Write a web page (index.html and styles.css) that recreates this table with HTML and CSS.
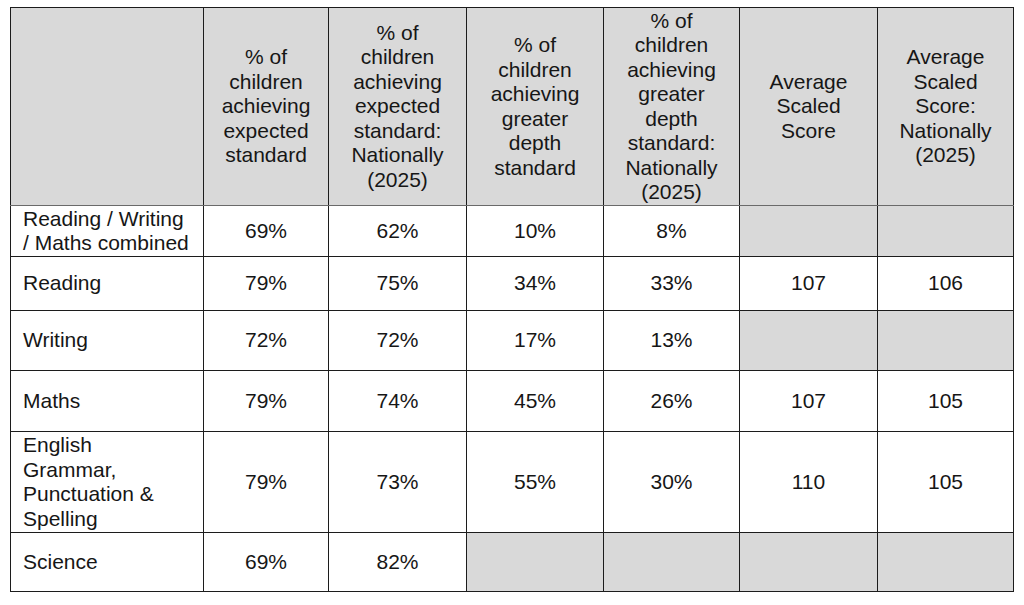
FILE: index.html
```html
<!DOCTYPE html>
<html lang="en">
<head>
<meta charset="utf-8">
<title>Results</title>
<link rel="stylesheet" href="styles.css">
</head>
<body>
<table class="results">
  <colgroup>
    <col class="c-subject">
    <col class="c-a">
    <col class="c-b">
    <col class="c-c">
    <col class="c-d">
    <col class="c-e">
    <col class="c-f">
  </colgroup>
  <thead>
    <tr class="r-head">
      <th></th>
      <th>% of children achieving expected standard</th>
      <th class="gl">% of children achieving expected standard: Nationally (2025)</th>
      <th class="gl">% of children achieving greater depth standard</th>
      <th>% of children achieving greater depth standard: Nationally (2025)</th>
      <th class="gl">Average Scaled Score</th>
      <th>Average Scaled Score: Nationally (2025)</th>
    </tr>
  </thead>
  <tbody>
    <tr class="r1">
      <td class="subj">Reading / Writing<br>/ Maths combined</td>
      <td>69%</td><td class="gl">62%</td><td class="gl">10%</td><td>8%</td>
      <td class="blank gl"></td><td class="blank"></td>
    </tr>
    <tr class="r2">
      <td class="subj">Reading</td>
      <td>79%</td><td class="gl">75%</td><td class="gl">34%</td><td>33%</td>
      <td class="gl">107</td><td>106</td>
    </tr>
    <tr class="r3">
      <td class="subj">Writing</td>
      <td>72%</td><td class="gl">72%</td><td class="gl">17%</td><td>13%</td>
      <td class="blank gl"></td><td class="blank"></td>
    </tr>
    <tr class="r4 gt">
      <td class="subj">Maths</td>
      <td>79%</td><td class="gl">74%</td><td class="gl">45%</td><td>26%</td>
      <td class="gl">107</td><td>105</td>
    </tr>
    <tr class="r5 gt">
      <td class="subj">English<br>Grammar,<br>Punctuation &amp;<br>Spelling</td>
      <td>79%</td><td class="gl">73%</td><td class="gl">55%</td><td>30%</td>
      <td class="gl">110</td><td>105</td>
    </tr>
    <tr class="r6">
      <td class="subj">Science</td>
      <td>69%</td><td class="gl">82%</td>
      <td class="blank gl"></td><td class="blank"></td>
      <td class="blank gl"></td><td class="blank"></td>
    </tr>
  </tbody>
</table>
</body>
</html>
```

FILE: styles.css
```css
html, body {
  margin: 0;
  padding: 0;
  background: #ffffff;
}

body {
  padding: 7px 0 0 10px;
  font-family: "Liberation Sans", Arial, sans-serif;
  color: #161616;
}

.results {
  border-collapse: collapse;
  table-layout: fixed;
  width: 1004px;
  border: 1px solid #707070;
  font-size: 21px;
  line-height: 24.5px;
}

.c-subject { width: 193px; }
.c-a { width: 125px; }
.c-b { width: 138px; }
.c-c { width: 137px; }
.c-d { width: 136px; }
.c-e { width: 138px; }
.c-f { width: 136px; }

.results th,
.results td {
  border: 1px solid #1c1c1c;
  padding: 0 12px;
  text-align: center;
  vertical-align: middle;
  font-weight: normal;
}

.results th {
  background: #d9d9d9;
}

.results .gl {
  border-left-color: #6a6a6a;
}

.results thead th {
  border-bottom-color: #6a6a6a;
}

.results tr.gt td {
  border-top-color: #6a6a6a;
}

.results td.subj {
  text-align: left;
}

.results td.blank {
  background: #d9d9d9;
}

.r-head { height: 198px; }
.r1 { height: 51px; }
.r2 { height: 54px; }
.r3 { height: 60px; }
.r4 { height: 61px; }
.r5 { height: 101px; }
.r6 { height: 59px; }
```
